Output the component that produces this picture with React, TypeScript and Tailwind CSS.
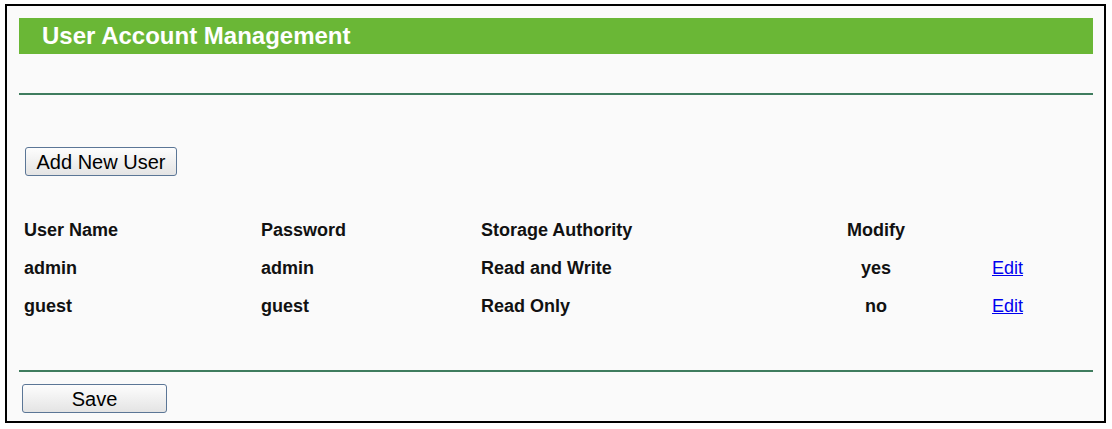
const users = [
  { name: "admin", password: "admin", authority: "Read and Write", modify: "yes" },
  { name: "guest", password: "guest", authority: "Read Only", modify: "no" },
];

function OldButton({ label, className }: { label: string; className: string }) {
  return (
    <button
      className={`rounded-[3px] border border-[#5b7696] bg-gradient-to-b from-[#fdfdfd] to-[#e4e4e4] text-[20px] leading-none text-black ${className}`}
    >
      {label}
    </button>
  );
}

export default function App() {
  return (
    <div className="h-[429px] w-[1112px] bg-white pl-[5px] pt-[4px] font-['Liberation_Sans',Arial,sans-serif]">
      <div className="flex h-[419px] w-[1101px] flex-col border-2 border-black bg-[#fafafa] pl-[12px] pr-[11px] pt-[12px]">
        <div className="flex h-[36px] items-center bg-[#6ab736] pl-[23px] text-[24px] font-bold text-white">
          User Account Management
        </div>

        <div className="mt-[39px] h-[2px] bg-[#3f7c5e]" />

        <div className="mt-[52px] pl-[6px]">
          <OldButton label="Add New User" className="h-[29px] w-[152px]" />
        </div>

        <table className="mt-[35px] w-full border-collapse text-[18px] font-bold text-[#111]">
          <tbody>
            <tr className="h-[38px]">
              <td className="w-[242px] pl-[5px]">User Name</td>
              <td className="w-[220px]">Password</td>
              <td className="w-[312px]">Storage Authority</td>
              <td className="w-[166px] text-center">Modify</td>
              <td />
            </tr>
            {users.map((u) => (
              <tr key={u.name} className="h-[38px]">
                <td className="pl-[5px]">{u.name}</td>
                <td>{u.password}</td>
                <td>{u.authority}</td>
                <td className="text-center">{u.modify}</td>
                <td className="pl-[33px] font-normal">
                  <a href="#" className="text-[#0000ee] underline">
                    Edit
                  </a>
                </td>
              </tr>
            ))}
          </tbody>
        </table>

        <div className="mt-[45px] h-[2px] bg-[#3f7c5e]" />

        <div className="mt-[12px] pl-[3px]">
          <OldButton label="Save" className="h-[29px] w-[145px]" />
        </div>
      </div>
    </div>
  );
}
